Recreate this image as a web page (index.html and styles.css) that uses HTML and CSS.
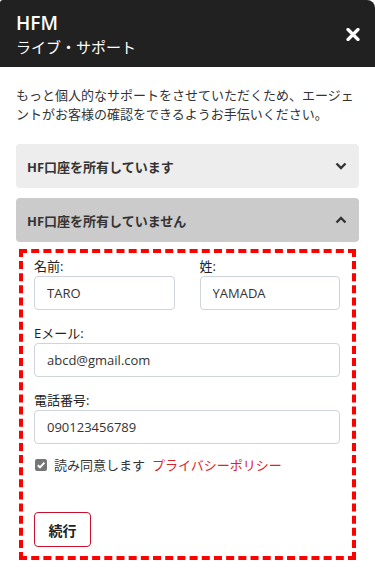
FILE: index.html
```html
<!DOCTYPE html>
<html lang="ja">
<head>
	<meta charset="utf-8" />
	<title>HFM ライブ・サポート</title>
	<link rel="stylesheet" href="styles.css">
</head>
<body>
	<div class="chat">
		<div class="chat-head">
			<div class="brand">
				<div class="brand-name">HFM</div>
				<div class="brand-sub">ライブ・サポート</div>
			</div>
			<svg class="close" width="14" height="13" viewBox="0 0 14 13">
				<path d="M2 1.5 L12 11.5 M12 1.5 L2 11.5" stroke="#fff" stroke-width="3.2" stroke-linecap="round" />
			</svg>
		</div>

		<div class="chat-body">
			<p class="intro">もっと個人的なサポートをさせていただくため、エージェントがお客様の確認をできるようお手伝いください。</p>

			<div class="acc acc-closed">
				<span>HF口座を所有しています</span>
				<svg width="12" height="8" viewBox="0 0 12 8">
					<path d="M1.5 1.5 L6 6 L10.5 1.5" fill="none" stroke="#333" stroke-width="2.4" />
				</svg>
			</div>

			<div class="acc acc-open">
				<span>HF口座を所有していません</span>
				<svg width="12" height="8" viewBox="0 0 12 8">
					<path d="M1.5 6.5 L6 2 L10.5 6.5" fill="none" stroke="#333" stroke-width="2.4" />
				</svg>
			</div>

			<form class="form">
				<div class="row">
					<div class="field">
						<label>名前:</label>
						<input type="text" value="TARO">
					</div>
					<div class="field">
						<label>姓:</label>
						<input type="text" value="YAMADA">
					</div>
				</div>
				<div class="field">
					<label>Eメール:</label>
					<input type="text" value="abcd@gmail.com">
				</div>
				<div class="field">
					<label>電話番号:</label>
					<input type="text" value="090123456789">
				</div>
				<div class="agree">
					<span class="check">
						<svg width="10" height="10" viewBox="0 0 10 10">
							<path d="M1.8 5.2 L4 7.4 L8.4 2.6" fill="none" stroke="#fff" stroke-width="2" />
						</svg>
					</span>
					<span>読み同意します</span>
					<a href="#">プライバシーポリシー</a>
				</div>
				<button type="button" class="next">続行</button>
			</form>
		</div>
	</div>
</body>
</html>
```

FILE: styles.css
```css
body
{
	margin: 0;
	font-family: "Open Sans", "Noto Sans CJK JP", sans-serif;
	color: #333;
	background: #fff;
}

.chat
{
	width: 375px;
}

.chat-head
{
	display: flex;
	align-items: center;
	justify-content: space-between;
	height: 67px;
	padding: 0 15px 0 16px;
	box-sizing: border-box;
	background-color: #212121;
	color: #fff;
	border-radius: 3px 8px 0 0;
}

.brand-name
{
	font-size: 19px;
	font-weight: 600;
	line-height: 24px;
	margin-top: 1px;
}

.brand-sub
{
	font-size: 15px;
	line-height: 22px;
	margin-top: 1px;
}

.close
{
	display: block;
	margin-top: 1px;
}

.chat-body
{
	padding: 19px 16px 0;
}

.intro
{
	margin: 0 0 20px;
	font-size: 13px;
	line-height: 19px;
	color: #333;
}

.acc
{
	display: flex;
	align-items: center;
	justify-content: space-between;
	height: 44px;
	padding: 0 12px 0 11px;
	border-radius: 4px;
	font-size: 13px;
	font-weight: 700;
	color: #333;
}

.acc svg
{
	display: block;
}

.acc-closed
{
	background-color: #ededed;
	margin-bottom: 10px;
}

.acc-open
{
	background-color: #cbcbcb;
}

.form
{
	margin: 7px 3px 0;
	padding: 4px 12px 9px 11px;
	border: 4px dashed #ff0000;
}

.row
{
	display: grid;
	grid-template-columns: 1fr 1fr;
	column-gap: 25px;
}

.field
{
	margin-bottom: 14px;
}

.field label
{
	display: block;
	font-size: 13px;
	line-height: 18px;
	margin-bottom: 1px;
	color: #222;
}

.field input
{
	display: block;
	width: 100%;
	height: 34px;
	box-sizing: border-box;
	padding: 0 12px;
	border: 1px solid #ced4da;
	border-radius: 4px;
	font-family: "Open Sans", sans-serif;
	font-size: 13px;
	color: #333;
	background: #fff;
}

.agree
{
	display: flex;
	align-items: center;
	margin-top: -2px;
	font-size: 13px;
	line-height: 18px;
	color: #333;
}

.check
{
	display: flex;
	align-items: center;
	justify-content: center;
	width: 12px;
	height: 12px;
	margin: 0 7px 0 1px;
	border-radius: 2px;
	background-color: #767676;
}

.agree a
{
	margin-left: 7px;
	color: #d9232d;
	text-decoration: none;
}

.next
{
	display: block;
	margin-top: 38px;
	width: 57px;
	height: 35px;
	padding: 0;
	border: 1px solid #c8102e;
	border-radius: 4px;
	background: #fff;
	font-family: "Open Sans", "Noto Sans CJK JP", sans-serif;
	font-size: 14px;
	font-weight: 700;
	color: #222;
}
```
